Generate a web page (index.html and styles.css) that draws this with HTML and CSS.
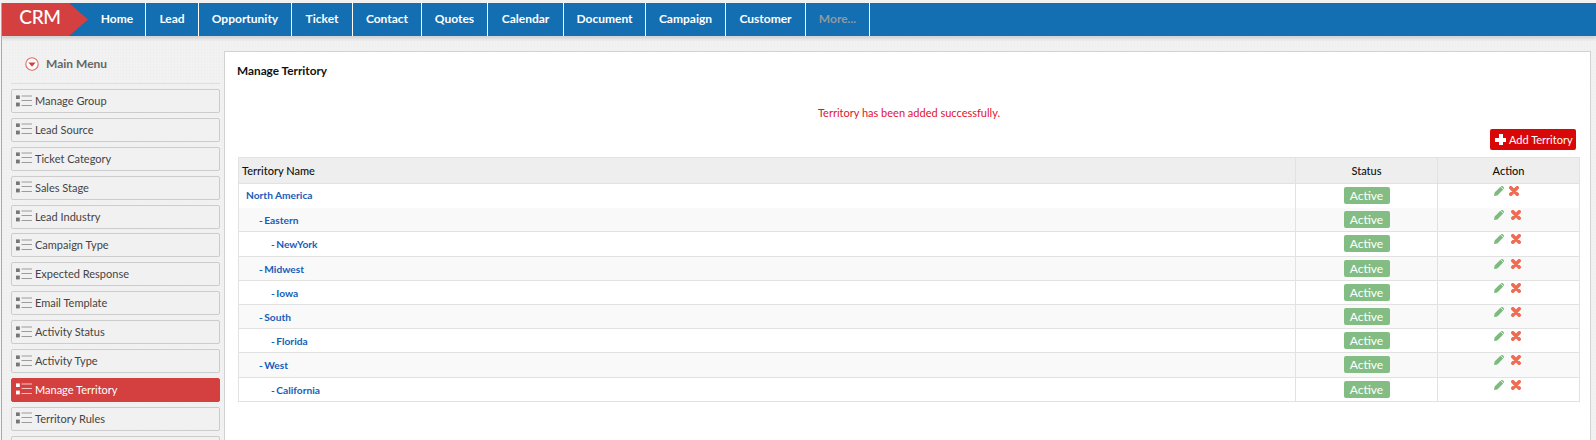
FILE: index.html
```html
<!DOCTYPE html>
<html lang="en">
<head>
  <meta charset="UTF-8" />
  <title>Manage Territory - CRM</title>
  <link rel="stylesheet" href="styles.css">
</head>
<body>
  <svg class="sprites" width="0" height="0">
    <symbol id="list" viewBox="0 0 16 12">
      <rect x="0" y="0.4" width="3.8" height="3.6" fill="currentColor"/>
      <rect x="0" y="7.6" width="3.8" height="3.8" fill="currentColor"/>
      <path d="M5.5 1h10.5M5.5 5.5h10.5M5.5 10.5h10.5" stroke="currentColor" stroke-width="1" fill="none" opacity=".7"/>
    </symbol>
    <symbol id="pencil" viewBox="0 0 10 10">
      <path d="M0 10l.6-3.4L6.4.8l2.8 2.8L3.4 9.4zM7.1.2c.5-.5 1.2-.5 1.7 0l1 1c.5.5.5 1.2 0 1.7l-.1.1L6.9.4z" fill="#7dbb7d"/>
    </symbol>
    <symbol id="cross" viewBox="0 0 10 10">
      <path d="M1.8 1.8l6.4 6.4M8.2 1.8L1.8 8.2" stroke="#ef6b52" stroke-width="3.6" stroke-linecap="round" fill="none"/>
    </symbol>
  </svg>

  <div class="topnav">
    <a class="logo">CRM</a>
    <ul class="navlist">
      <li class="w-home">Home</li>
      <li class="w-lead">Lead</li>
      <li class="w-opp">Opportunity</li>
      <li class="w-ticket">Ticket</li>
      <li class="w-contact">Contact</li>
      <li class="w-quotes">Quotes</li>
      <li class="w-calendar">Calendar</li>
      <li class="w-document">Document</li>
      <li class="w-campaign">Campaign</li>
      <li class="w-customer">Customer</li>
      <li class="w-more muted">More...</li>
    </ul>
  </div>

  <div class="wrapper">
    <div class="sidebar">
      <div class="menu-head">
        <svg class="menu-toggle" width="14" height="14" viewBox="0 0 14 14">
          <circle cx="7" cy="7" r="6.2" fill="#fff" stroke="#e06a66" stroke-width="1.1"/>
          <path d="M3.4 5.4h7.2L7 9.8z" fill="#d43f3f"/>
        </svg>
        Main Menu
      </div>
      <a class="side-item"><svg class="list-ico"><use href="#list"/></svg>Manage Group</a>
      <a class="side-item"><svg class="list-ico"><use href="#list"/></svg>Lead Source</a>
      <a class="side-item"><svg class="list-ico"><use href="#list"/></svg>Ticket Category</a>
      <a class="side-item"><svg class="list-ico"><use href="#list"/></svg>Sales Stage</a>
      <a class="side-item"><svg class="list-ico"><use href="#list"/></svg>Lead Industry</a>
      <a class="side-item"><svg class="list-ico"><use href="#list"/></svg>Campaign Type</a>
      <a class="side-item"><svg class="list-ico"><use href="#list"/></svg>Expected Response</a>
      <a class="side-item"><svg class="list-ico"><use href="#list"/></svg>Email Template</a>
      <a class="side-item"><svg class="list-ico"><use href="#list"/></svg>Activity Status</a>
      <a class="side-item"><svg class="list-ico"><use href="#list"/></svg>Activity Type</a>
      <a class="side-item active"><svg class="list-ico"><use href="#list"/></svg>Manage Territory</a>
      <a class="side-item"><svg class="list-ico"><use href="#list"/></svg>Territory Rules</a>
      <a class="side-item"></a>
    </div>

    <div class="content">
      <h1 class="page-title">Manage Territory</h1>
      <p class="message">Territory has been added successfully.</p>
      <div class="toolbar">
        <a class="add-btn"><span class="plus"></span>Add Territory</a>
      </div>
      <table class="grid">
        <thead>
          <tr><th class="col-name">Territory Name</th><th class="col-status">Status</th><th class="col-action">Action</th></tr>
        </thead>
        <tbody>
          <tr class="tight">
            <td><a>North America</a></td>
            <td class="center"><span class="badge">Active</span></td>
            <td class="actions"><svg class="pencil"><use href="#pencil"/></svg><svg class="cross"><use href="#cross"/></svg></td>
          </tr>
          <tr>
            <td class="lvl1"><a>- Eastern</a></td>
            <td class="center"><span class="badge">Active</span></td>
            <td class="actions"><svg class="pencil"><use href="#pencil"/></svg><svg class="cross"><use href="#cross"/></svg></td>
          </tr>
          <tr>
            <td class="lvl2"><a>- NewYork</a></td>
            <td class="center"><span class="badge">Active</span></td>
            <td class="actions"><svg class="pencil"><use href="#pencil"/></svg><svg class="cross"><use href="#cross"/></svg></td>
          </tr>
          <tr>
            <td class="lvl1"><a>- Midwest</a></td>
            <td class="center"><span class="badge">Active</span></td>
            <td class="actions"><svg class="pencil"><use href="#pencil"/></svg><svg class="cross"><use href="#cross"/></svg></td>
          </tr>
          <tr>
            <td class="lvl2"><a>- Iowa</a></td>
            <td class="center"><span class="badge">Active</span></td>
            <td class="actions"><svg class="pencil"><use href="#pencil"/></svg><svg class="cross"><use href="#cross"/></svg></td>
          </tr>
          <tr>
            <td class="lvl1"><a>- South</a></td>
            <td class="center"><span class="badge">Active</span></td>
            <td class="actions"><svg class="pencil"><use href="#pencil"/></svg><svg class="cross"><use href="#cross"/></svg></td>
          </tr>
          <tr>
            <td class="lvl2"><a>- Florida</a></td>
            <td class="center"><span class="badge">Active</span></td>
            <td class="actions"><svg class="pencil"><use href="#pencil"/></svg><svg class="cross"><use href="#cross"/></svg></td>
          </tr>
          <tr>
            <td class="lvl1"><a>- West</a></td>
            <td class="center"><span class="badge">Active</span></td>
            <td class="actions"><svg class="pencil"><use href="#pencil"/></svg><svg class="cross"><use href="#cross"/></svg></td>
          </tr>
          <tr>
            <td class="lvl2"><a>- California</a></td>
            <td class="center"><span class="badge">Active</span></td>
            <td class="actions"><svg class="pencil"><use href="#pencil"/></svg><svg class="cross"><use href="#cross"/></svg></td>
          </tr>
        </tbody>
      </table>
    </div>
  </div>
</body>
</html>
```
FILE: styles.css
```css
html, body {
  margin: 0;
  padding: 0;
  height: 440px;
  overflow: hidden;
}
body {
  font-family: Lato, "Open Sans", sans-serif;
  font-size: 12px;
  color: #333;
  background-color: #f2f2f2;
  background-image:
    repeating-linear-gradient(0deg, rgba(0, 0, 0, 0.008) 0 1px, transparent 1px 3px),
    repeating-linear-gradient(90deg, rgba(0, 0, 0, 0.008) 0 1px, transparent 1px 3px);
  border-left: 1px solid #f4f4f4;
  box-sizing: border-box;
}
.sprites {
  position: absolute;
}
a {
  text-decoration: none;
}

/* top bar */
.topnav {
  display: flex;
  height: 33px;
  margin-top: 3px;
  background: #136eb2;
  box-shadow: 0 3px 3px rgba(0, 0, 0, 0.12);
  border-left: 1px solid #aaa;
}
.logo {
  flex: none;
  width: 76px;
  padding-right: 10px;
  clip-path: polygon(0 0, 67px 0, 86px 50%, 67px 100%, 0 100%);
  background: #d43f3f;
  color: #fff;
  font-size: 19px;
  font-weight: 500;
  letter-spacing: -0.3px;
  line-height: 28px;
  text-align: center;
}
.navlist {
  display: flex;
  margin: 0;
  padding: 0;
  list-style: none;
}
.navlist li {
  box-sizing: border-box;
  border-right: 1px solid #fff;
  color: #fff;
  font-weight: 700;
  font-size: 12px;
  line-height: 32px;
  text-align: center;
}
.navlist .muted {
  color: #8f9aa3;
}
.w-home { width: 58px; padding-left: 1px; }
.w-lead { width: 53px; }
.w-opp { width: 93px; }
.w-ticket { width: 61px; }
.w-contact { width: 69px; }
.w-quotes { width: 66px; }
.w-calendar { width: 76px; }
.w-document { width: 82px; }
.w-campaign { width: 80px; }
.w-customer { width: 80px; }
.w-more { width: 64px; }

/* page */
.wrapper {
  display: flex;
  height: 404px;
  border-left: 1px solid #aaa;
}
.sidebar {
  flex: none;
  width: 209px;
  margin-left: 9px;
  margin-right: 4px;
}
.menu-head {
  display: flex;
  align-items: center;
  gap: 7px;
  box-sizing: border-box;
  height: 48px;
  padding: 8px 0 0 14px;
  margin-bottom: 5px;
  border-bottom: 1px solid #dedede;
  color: #666;
  font-size: 12px;
  font-weight: 700;
}
.side-item {
  display: flex;
  align-items: center;
  box-sizing: border-box;
  height: 24px;
  margin-bottom: 4.9px;
  padding: 0 0 1px 4px;
  background: #f1f1f1;
  border: 1px solid #ccc;
  border-radius: 2px;
  color: #444;
  font-size: 11px;
}
.side-item.active {
  background: #d43f3f;
  border-color: #d43f3f;
  color: #fff;
}
.list-ico {
  width: 16px;
  height: 12px;
  margin-right: 3px;
  color: #777;
}
.side-item.active .list-ico {
  color: #fff;
}
.content {
  flex: none;
  width: 1367px;
  height: 400px;
  box-sizing: border-box;
  margin-top: 15px;
  padding: 0 10px 0 13px;
  background: #fff;
  border: 1px solid #d2d2d2;
}
.page-title {
  margin: 11px 0 0 -1px;
  color: #111;
  font-size: 11.8px;
  font-weight: 700;
  line-height: 16px;
}
.message {
  margin: 26px 0 0;
  color: #e2122e;
  font-size: 11px;
  line-height: 16px;
  text-align: center;
}
.toolbar {
  display: flex;
  justify-content: flex-end;
  margin-top: 8px;
  padding-right: 4px;
}
.add-btn {
  display: flex;
  align-items: center;
  box-sizing: border-box;
  width: 86px;
  height: 21px;
  padding-left: 5px;
  background: #d80808;
  border-radius: 2px;
  color: #fff;
  font-size: 11px;
  white-space: nowrap;
}
.plus {
  flex: none;
  width: 11px;
  height: 11px;
  margin-right: 3px;
  background:
    linear-gradient(#fff, #fff) center / 4px 11px no-repeat,
    linear-gradient(#fff, #fff) center / 11px 4px no-repeat;
}

/* territory table */
.grid {
  width: 100%;
  margin-top: 7px;
  border-collapse: collapse;
  table-layout: fixed;
  font-size: 11px;
}
.grid th, .grid td {
  border: 1px solid #e2e2e2;
  padding: 0;
}
.grid th {
  height: 25px;
  background: #eee;
  color: #111;
  font-weight: 500;
}
.col-name {
  padding-left: 3px !important;
  text-align: left;
}
.col-status {
  width: 141px;
}
.col-action {
  width: 141px;
}
.grid td {
  height: 24.2px;
  box-sizing: border-box;
  padding-left: 7px;
}
.grid tbody tr:nth-child(even) {
  background: #f9f9f9;
}
.grid tr.tight td {
  border-bottom-color: transparent;
}
.grid tr.tight td:first-child {
  padding-bottom: 2px;
}
.grid td a {
  color: #155dba;
  font-size: 10.2px;
  font-weight: 700;
}
.grid td.lvl1 {
  padding-left: 20px;
}
.grid td.lvl2 {
  padding-left: 32px;
}
.grid td.lvl1 a, .grid td.lvl2 a {
  word-spacing: -1px;
}
.grid td.center {
  padding: 0;
  text-align: center;
}
.badge {
  display: inline-block;
  width: 46px;
  height: 17px;
  background: #83bd83;
  border-radius: 2px;
  color: #fff;
  font-size: 12px;
  line-height: 17px;
  vertical-align: middle;
}
.grid td.actions {
  padding: 2px 0 0 56px;
  vertical-align: top;
  line-height: 0;
}
.pencil {
  width: 10px;
  height: 10px;
}
.cross {
  width: 10px;
  height: 10px;
  margin-left: 7px;
}
.tight .cross {
  margin-left: 5px;
}
```
